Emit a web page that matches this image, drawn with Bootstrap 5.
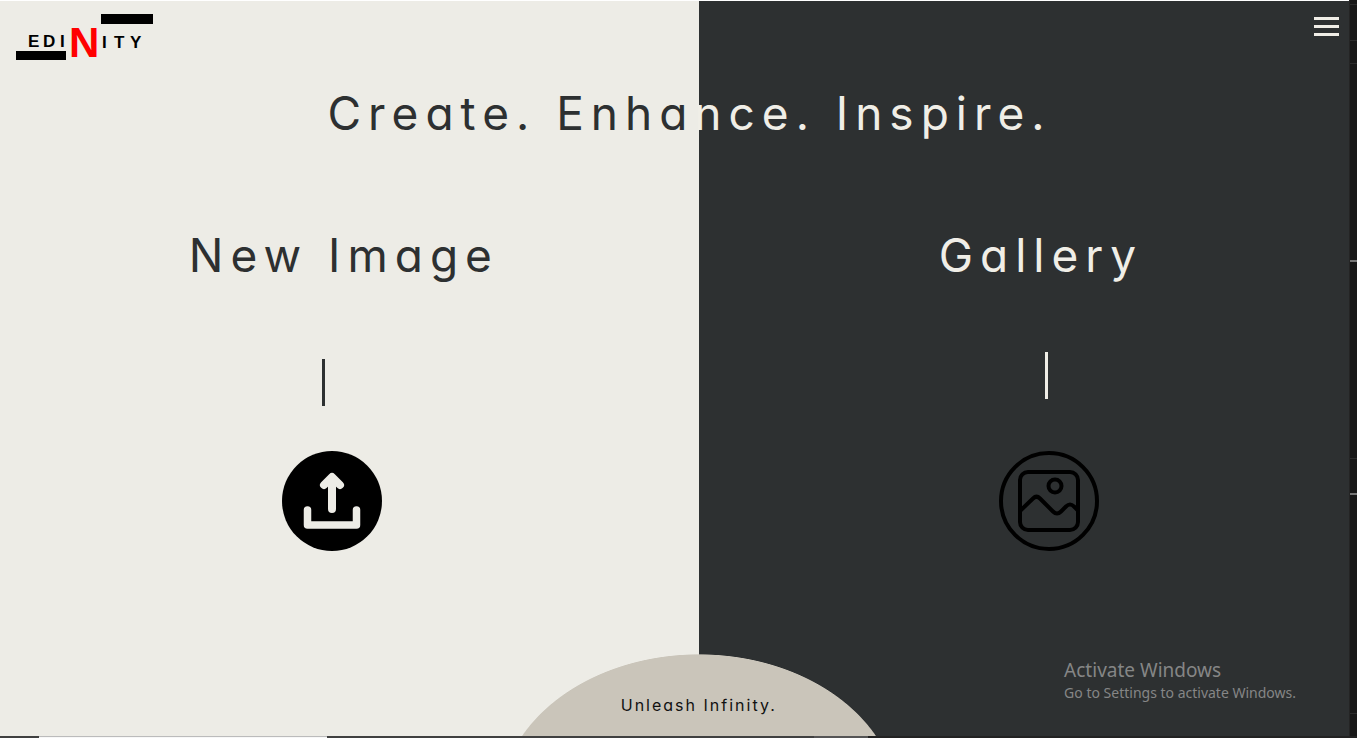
<!DOCTYPE html>
<html lang="en">
<head>
<meta charset="utf-8">
<meta name="viewport" content="width=device-width, initial-scale=1">
<title>Edinity</title>
<link href="https://cdn.jsdelivr.net/npm/bootstrap@5.3.0/dist/css/bootstrap.min.css" rel="stylesheet">
<style>
  :root { --paper: #edece6; --ink: #2d3031; --cream: #f0eee7; --sand: #cac5ba; --split: 51.8%; }
  body { font-family: Inter, Lato, sans-serif; font-feature-settings: "cv11", "ss03"; background: #181818; }
  .screen { border-top: 1px solid #fff; background: linear-gradient(to right, var(--paper) var(--split), var(--ink) var(--split)); }
  .topbar { padding: 8px 10px 0 16px; height: 64px; }
  .logo { width: 138px; height: 56px; }
  .menu-btn { width: 25px; gap: 5px; }
  .menu-btn span { height: 3px; background: var(--cream); }
  .display-line { font-size: 46px; line-height: 56px; letter-spacing: 7px; font-weight: 400; }
  .headline { padding-left: 30px; margin-top: 20px; }
  .on-light { color: var(--ink); }
  .on-dark { color: var(--cream); }
  .panels { padding-top: 86px; }
  .panel-new { width: var(--split); padding-right: 35px; }
  .panel-gallery { padding-left: 50px; }
  .stick-slot { height: 168px; }
  .stick { width: 3px; height: 47px; background: currentColor; }
  .panel-new .stick { margin-top: 76px; }
  .panel-gallery .stick { margin-top: 69px; }
  .round-icon { width: 100px; height: 100px; }
  .dome { left: var(--split); bottom: 0; width: 400px; height: 82px; background: radial-gradient(200px 152px at 50% 152px, var(--sand) 99.5%, transparent 100%); }
  .tagline { font-size: 16px; line-height: 20px; letter-spacing: 2px; color: #111; padding-top: 41px; }
  .watermark { right: 53px; bottom: 33px; font-family: "Noto Sans", sans-serif; color: #858686; }
  .watermark .big { font-size: 19px; line-height: 26px; }
  .watermark .fine { font-size: 14px; line-height: 20px; }
  .edge { width: 8px; background: #181818; border-left: 1px solid #242424; }
  .edge .tick { height: 2px; background: #777; }
  .edge .seam { height: 1px; background: #2c2c2c; }
  .edge .run-4 { flex: 4; } .edge .run-22 { flex: 22; } .edge .run-35 { flex: 35; }
  .edge .run-197 { flex: 197; } .edge .run-219 { flex: 219; }
  .shelf { height: 2px; background: linear-gradient(to right, #404040 60%, #555 60%, #555 64%, #222 64%); }
  .shelf .tab { width: 288px; margin-left: 39px; background: #f7f7f7; border-top: 1px solid #bbb; }
</style>
</head>
<body class="vh-100 d-flex flex-column overflow-hidden">
<div class="d-flex flex-fill">
  <main class="screen flex-fill position-relative d-flex flex-column overflow-hidden">
    <header class="topbar d-flex justify-content-between align-items-start">
      <a href="#" aria-label="Edinity home">
        <svg class="logo d-block overflow-visible" viewBox="16 9 138 56" font-family="'Liberation Sans Narrow','Liberation Sans',sans-serif" font-weight="700">
          <rect x="16" y="51" width="50" height="9"/>
          <rect x="101" y="14" width="52" height="10"/>
          <text y="47" font-size="17" x="28 43 60">EDI</text>
          <text y="57" x="69" font-size="42" fill="#f00">N</text>
          <text y="48" font-size="17" x="102 114 130">ITY</text>
        </svg>
      </a>
      <button type="button" class="menu-btn btn p-0 border-0 rounded-0 d-flex flex-column mt-2" aria-label="Open menu">
        <span class="w-100"></span><span class="w-100"></span><span class="w-100"></span>
      </button>
    </header>
    <h1 class="display-line headline text-center text-nowrap mb-0"><span class="on-light">Create. Enha</span><span class="on-dark">nce. Inspire.</span></h1>
    <div class="panels d-flex flex-fill">
      <section class="panel-new on-light d-flex flex-column align-items-center">
        <h2 class="display-line mb-0 ps-4">New Image</h2>
        <div class="stick-slot"><div class="stick me-3"></div></div>
        <a href="#" aria-label="Upload a new image">
          <svg class="round-icon d-block" viewBox="0 0 100 100" fill="none" stroke-linecap="round" stroke-linejoin="round">
            <circle cx="50" cy="50" r="50" fill="#000"/>
            <path d="M50 58V27M42 34l8-8 8 8" stroke="#edece6" stroke-width="8"/>
            <path d="M25.500 59V74H74.500V59" stroke="#edece6" stroke-width="7.500"/>
          </svg>
        </a>
      </section>
      <section class="panel-gallery on-dark flex-fill d-flex flex-column align-items-center">
        <h2 class="display-line mb-0 pe-3">Gallery</h2>
        <div class="stick-slot"><div class="stick me-1"></div></div>
        <a href="#" aria-label="Open the gallery">
          <svg class="round-icon d-block" viewBox="0 0 100 100" fill="none" stroke="#000" stroke-width="4" stroke-linejoin="round">
            <circle cx="50" cy="50" r="48"/>
            <rect x="21" y="21" width="58" height="58" rx="8"/>
            <circle cx="56" cy="35" r="6.500"/>
            <path d="M21 60L34 47.500Q37.500 44 41 47.500L54 60.500Q58 64.500 62 60.500L67 55.500Q71 51.500 75 55.500L79 59.500"/>
          </svg>
        </a>
      </section>
    </div>
    <footer class="dome position-absolute translate-middle-x text-center"><p class="tagline mb-0">Unleash Infinity.</p></footer>
    <div class="watermark position-absolute"><div class="big">Activate Windows</div><div class="fine">Go to Settings to activate Windows.</div></div>
  </main>
  <aside class="edge d-flex flex-column" aria-hidden="true">
    <div class="run-4"></div><div class="seam"></div>
    <div class="run-35"></div><div class="seam"></div>
    <div class="run-22"></div><div class="seam"></div>
    <div class="run-197"></div><div class="tick"></div>
    <div class="run-197"></div><div class="seam"></div>
    <div class="run-35"></div><div class="tick"></div>
    <div class="run-219"></div><div class="seam"></div>
    <div class="run-22"></div>
  </aside>
</div>
<div class="shelf d-flex"><div class="tab"></div></div>
<script src="https://cdn.jsdelivr.net/npm/bootstrap@5.3.0/dist/js/bootstrap.bundle.min.js"></script>
</body>
</html>
